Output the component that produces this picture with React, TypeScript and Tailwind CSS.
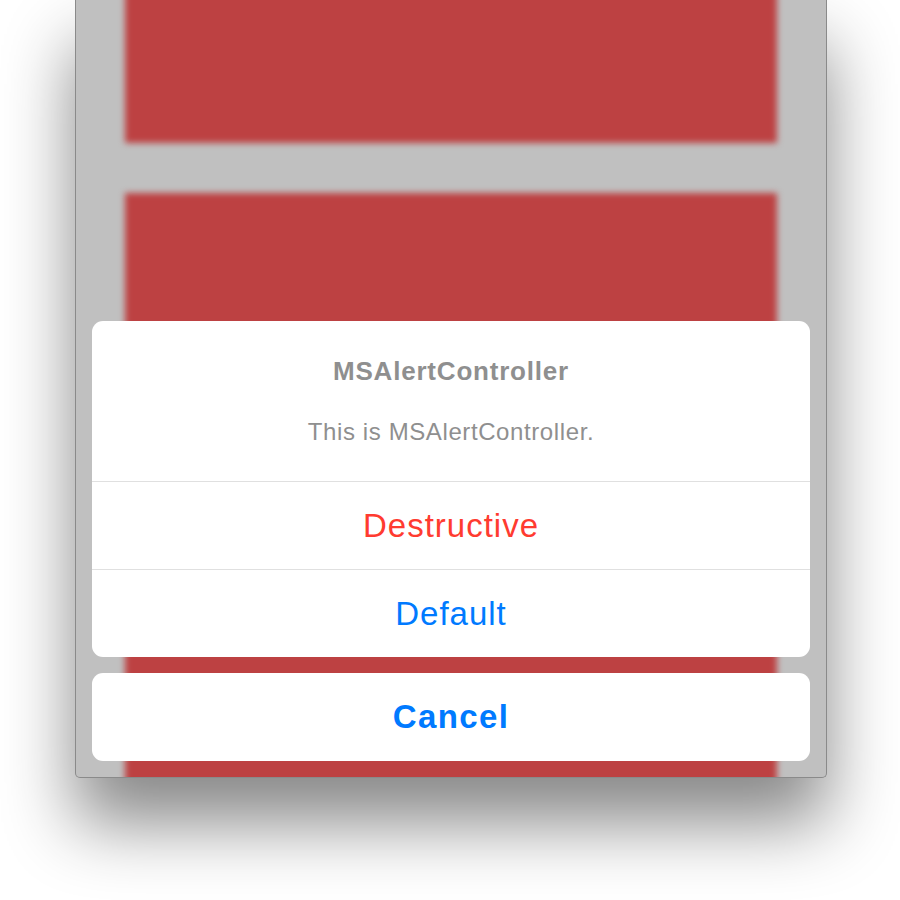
const font = "font-['Liberation_Sans',Arial,sans-serif]";

const actions = [
  { label: "Destructive", color: "text-[#ff3b30]" },
  { label: "Default", color: "text-[#007aff]" },
];

export default function App() {
  return (
    <div className={`h-[900px] w-[900px] overflow-hidden bg-white ${font}`}>
      <div className="relative ml-[75px] h-[778px] w-[752px] overflow-hidden rounded-b-[5px] border border-t-0 border-[#8a8a8a] bg-[#c0c0c0] shadow-[0_45px_70px_rgba(0,0,0,0.47)]">
        {/* blurred content behind the sheet */}
        <div className="flex flex-col gap-[50px] px-[49px] blur-[3px]">
          <div className="-mt-[20px] h-[163px] bg-[#bd4142]" />
          <div className="h-[640px] bg-[#bd4142]" />
        </div>

        {/* action sheet */}
        <div className="absolute bottom-[16px] left-[16px] right-[16px] flex flex-col gap-[16px]">
          <div className="overflow-hidden rounded-[11px] bg-white">
            <div className="flex flex-col items-center pt-[35px] pb-[35px] text-[#8f8f8f]">
              <div className="text-[26px] font-bold leading-[30px] tracking-[0.8px]">MSAlertController</div>
              <div className="mt-[32px] text-[24px] leading-[28px] tracking-[0.6px]">This is MSAlertController.</div>
            </div>
            {actions.map((a, i) => (
              <div
                key={i}
                className={`flex h-[88px] items-center justify-center border-t border-[#e0e0e0] text-[33px] tracking-[1px] ${a.color}`}
              >
                {a.label}
              </div>
            ))}
          </div>
          <div className="flex h-[88px] items-center justify-center rounded-[11px] bg-white text-[33px] font-bold tracking-[1.4px] text-[#007aff]">
            Cancel
          </div>
        </div>
      </div>
    </div>
  );
}
